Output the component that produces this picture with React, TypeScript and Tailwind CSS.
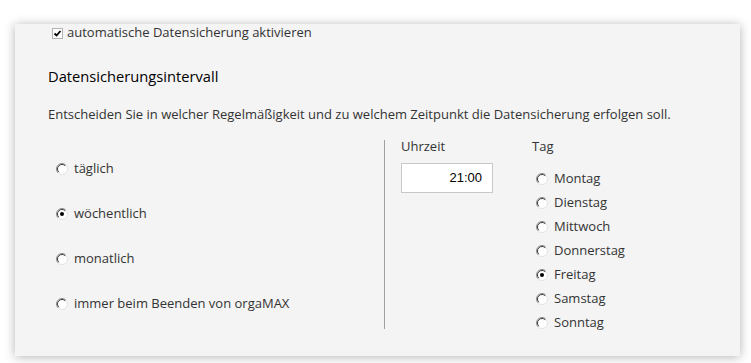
function Radio({ checked = false }: { checked?: boolean }) {
  return (
    <svg width="12" height="12" viewBox="0 0 12 12" className="shrink-0">
      <circle cx="6" cy="6" r="5.5" fill="#ffffff" />
      <path d="M9.9 2.1 A5.5 5.5 0 0 0 2.1 9.9" fill="none" stroke="#8c8c8c" strokeWidth="1" />
      <path d="M9.2 2.8 A4.5 4.5 0 0 0 2.8 9.2" fill="none" stroke="#3c3c3c" strokeWidth="1" />
      <path d="M9.9 2.1 A5.5 5.5 0 0 1 2.1 9.9" fill="none" stroke="#e2e2e2" strokeWidth="1" />
      {checked && <circle cx="6" cy="6" r="2" fill="#000000" />}
    </svg>
  );
}

export default function App() {
  const intervals = [
    { label: 'täglich', checked: false },
    { label: 'wöchentlich', checked: true },
    { label: 'monatlich', checked: false },
    { label: 'immer beim Beenden von orgaMAX', checked: false },
  ];
  const days = ['Montag', 'Dienstag', 'Mittwoch', 'Donnerstag', 'Freitag', 'Samstag', 'Sonntag'];

  return (
    <div className="relative w-[751px] h-[363px] overflow-hidden bg-white pt-[16px] pl-[15px] font-['Open_Sans',sans-serif] text-[13px] text-[#333333]">
      <div className="w-[725px] h-[332px] bg-[#f4f4f4] shadow-[0_1px_10px_rgba(0,0,0,0.3)] pl-[33px]">
        {/* aktivieren */}
        <div className="flex items-center h-[18px] mt-[8px] pl-[4px] gap-[4px]">
          <span className="w-[11px] h-[11px] border border-[#b4b4b4] bg-white flex items-center justify-center">
            <svg width="9" height="9" viewBox="0 0 9 9">
              <path d="M1.5 4.5 L3.5 6.5 L7.5 2" fill="none" stroke="#000" strokeWidth="1.8" />
            </svg>
          </span>
          <span>automatische Datensicherung aktivieren</span>
        </div>
        <div className="mt-[24px] h-[20px] leading-[20px] text-[14.7px] text-black">Datensicherungsintervall</div>
        <div className="mt-[19px] h-[18px] leading-[18px]">
          Entscheiden Sie in welcher Regelmäßigkeit und zu welchem Zeitpunkt die Datensicherung erfolgen soll.
        </div>

        {/* Intervall / Uhrzeit / Tag */}
        <div className="flex mt-[17px] h-[189px]">
          <div className="w-[336px] pt-[19px] pl-[8px] flex flex-col gap-[25px]">
            {intervals.map(i => (
              <div key={i.label} className="flex items-center h-[20px] gap-[6px]">
                <Radio checked={i.checked} />
                <span>{i.label}</span>
              </div>
            ))}
          </div>
          <div className="w-px h-full bg-[#a0a0a0]" />
          <div className="w-[147px] pl-[16px]">
            <div className="h-[14px] leading-[12px]">Uhrzeit</div>
            <div className="mt-[9px] w-[92px] h-[30px] bg-white border border-[#c8c8c8] flex items-center justify-end pr-[10px] font-['Liberation_Sans',sans-serif] text-[13px] text-black">
              21:00
            </div>
          </div>
          <div>
            <div className="h-[14px] leading-[12px]">Tag</div>
            <div className="mt-[13px] pl-[4px] flex flex-col">
              {days.map(d => (
                <div key={d} className="flex items-center h-[24px] gap-[6px]">
                  <Radio checked={d === 'Freitag'} />
                  <span>{d}</span>
                </div>
              ))}
            </div>
          </div>
        </div>
      </div>
      <div className="mt-[4px] pl-[33px] text-[14.7px] leading-[20px] text-[#e6e6e6]">Datenumfang</div>
    </div>
  );
}
